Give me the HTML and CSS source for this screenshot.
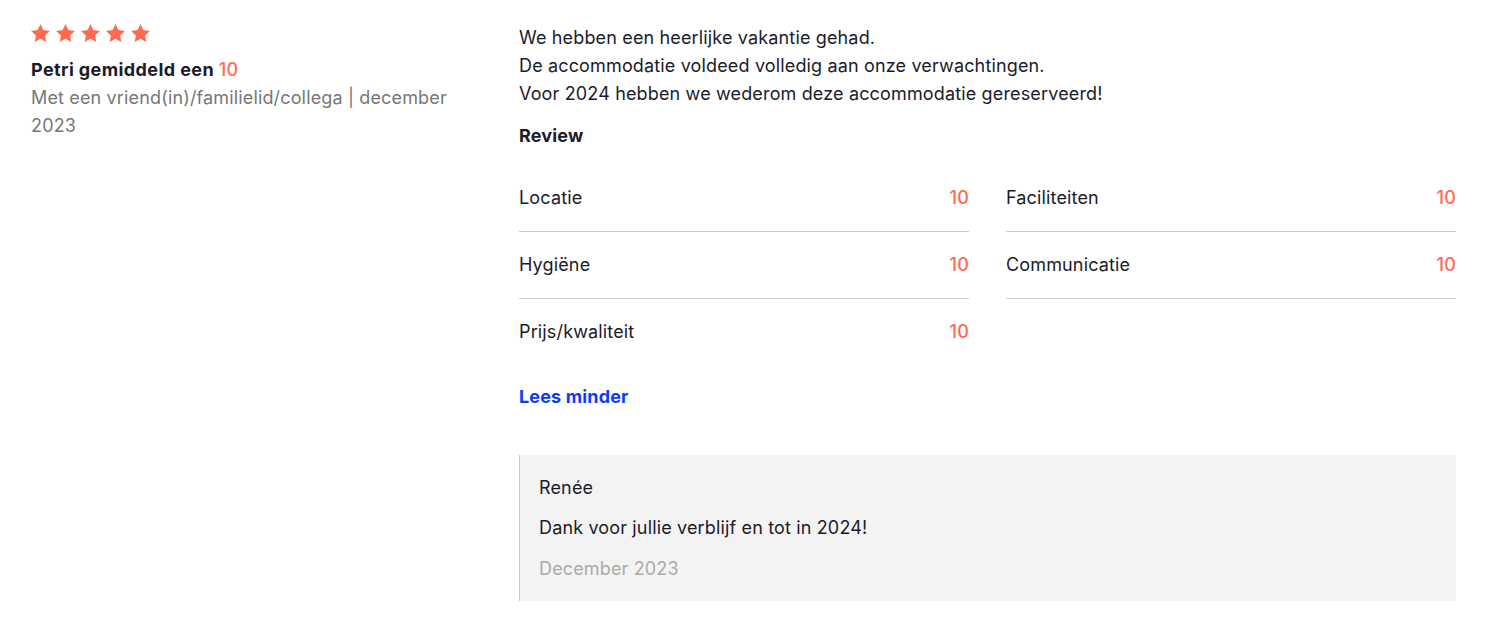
FILE: index.html
```html
<!DOCTYPE html>
<html lang="nl">
<head>
  <meta charset="UTF-8" />
  <meta name="viewport" content="width=device-width, initial-scale=1.0"/>
  <title>Review</title>
  <link rel="stylesheet" href="styles.css">
</head>
<body>
  <div class="review">
    <div class="meta">
      <div class="stars">
        <svg viewBox="1.3 1.5 21.4 20.4"><path d="M12 1.5l3.2 6.9 7.5.9-5.5 5.2 1.4 7.4L12 18.2l-6.6 3.7 1.4-7.4L1.3 9.3l7.5-.9z"/></svg>
        <svg viewBox="1.3 1.5 21.4 20.4"><path d="M12 1.5l3.2 6.9 7.5.9-5.5 5.2 1.4 7.4L12 18.2l-6.6 3.7 1.4-7.4L1.3 9.3l7.5-.9z"/></svg>
        <svg viewBox="1.3 1.5 21.4 20.4"><path d="M12 1.5l3.2 6.9 7.5.9-5.5 5.2 1.4 7.4L12 18.2l-6.6 3.7 1.4-7.4L1.3 9.3l7.5-.9z"/></svg>
        <svg viewBox="1.3 1.5 21.4 20.4"><path d="M12 1.5l3.2 6.9 7.5.9-5.5 5.2 1.4 7.4L12 18.2l-6.6 3.7 1.4-7.4L1.3 9.3l7.5-.9z"/></svg>
        <svg viewBox="1.3 1.5 21.4 20.4"><path d="M12 1.5l3.2 6.9 7.5.9-5.5 5.2 1.4 7.4L12 18.2l-6.6 3.7 1.4-7.4L1.3 9.3l7.5-.9z"/></svg>
      </div>
      <p class="author">Petri gemiddeld een <span class="score">10</span></p>
      <p class="context">Met een vriend(in)/familielid/collega | december 2023</p>
    </div>

    <div class="content">
      <p class="text">We hebben een heerlijke vakantie gehad.<br>
        De accommodatie voldeed volledig aan onze verwachtingen.<br>
        Voor 2024 hebben we wederom deze accommodatie gereserveerd!</p>

      <h3>Review</h3>
      <div class="ratings">
        <div class="rating"><span>Locatie</span><span class="score">10</span></div>
        <div class="rating"><span>Faciliteiten</span><span class="score">10</span></div>
        <div class="rating"><span>Hygiëne</span><span class="score">10</span></div>
        <div class="rating"><span>Communicatie</span><span class="score">10</span></div>
        <div class="rating"><span>Prijs/kwaliteit</span><span class="score">10</span></div>
      </div>

      <a href="#" class="toggle">Lees minder</a>

      <div class="reply">
        <p class="reply-name">Renée</p>
        <p class="reply-text">Dank voor jullie verblijf en tot in 2024!</p>
        <p class="reply-date">December 2023</p>
      </div>
    </div>
  </div>
</body>
</html>
```

FILE: styles.css
```css
body {
  font-family: Inter, "Noto Sans", sans-serif;
  font-size: 18px;
  line-height: 28px;
  letter-spacing: 0.15px;
  color: #1b1b2a;
  background: #ffffff;
  margin: 0;
}
p, h3 {
  margin: 0;
}
.review {
  display: flex;
  padding: 24px 31px 0 31px;
}
.meta {
  width: 450px;
  margin-right: 38px;
}
.stars {
  display: flex;
  gap: 6px;
  height: 20px;
}
.stars svg {
  width: 19px;
  height: 18px;
  fill: #ff6a52;
}
.author {
  margin-top: 12px;
  font-weight: 700;
  letter-spacing: 0.4px;
}
.score {
  color: #ff6a52;
  font-weight: 500;
}
.context {
  color: #777777;
}
.content {
  width: 937px;
}
h3 {
  margin-top: 14px;
  font-size: 18px;
  font-weight: 700;
}
.ratings {
  display: grid;
  grid-template-columns: 1fr 1fr;
  column-gap: 37px;
  margin-top: 15px;
}
.rating {
  display: flex;
  justify-content: space-between;
  padding: 19px 0;
  border-bottom: 1px solid #cccccc;
}
.rating:last-child {
  border-bottom: none;
}
.toggle {
  display: inline-block;
  margin-top: 18px;
  color: #0a3cff;
  font-weight: 700;
  text-decoration: none;
}
.reply {
  margin-top: 44px;
  background: #f3f3f3;
  border-left: 1px solid #cccccc;
  padding: 19px 20px 18px 19px;
}
.reply-text {
  margin-top: 12px;
}
.reply-date {
  margin-top: 13px;
  color: #aaaaaa;
}
```
